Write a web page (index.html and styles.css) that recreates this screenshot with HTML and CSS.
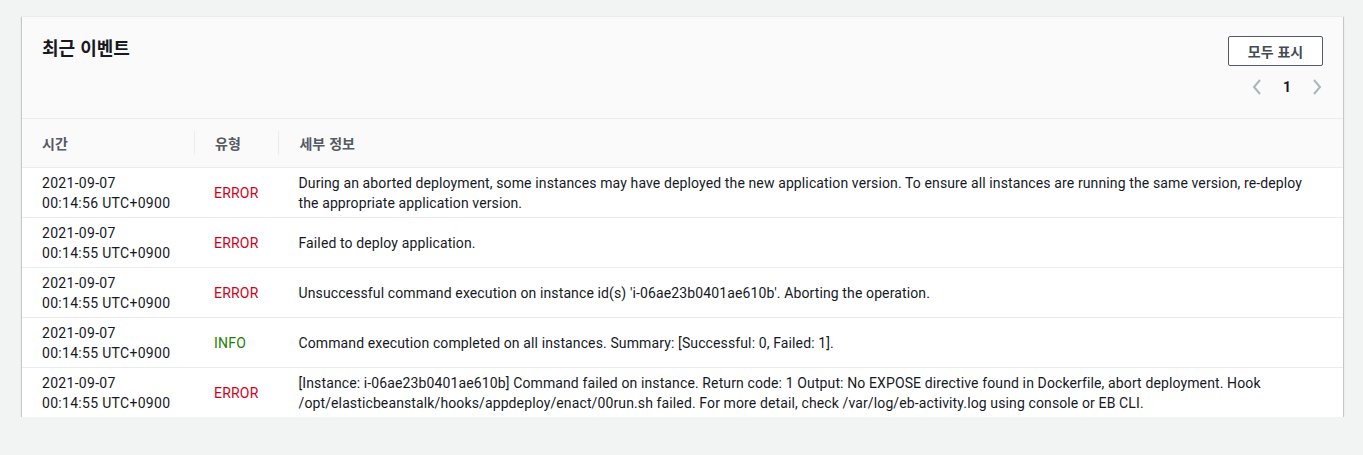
FILE: index.html
```html
<!DOCTYPE html>
<html lang="ko">
<head>
<meta charset="utf-8">
<title>최근 이벤트</title>
<link rel="stylesheet" href="styles.css">
</head>
<body>
<div class="card">
  <div class="card-head">
    <h2 class="title">최근 이벤트</h2>
    <div class="actions">
      <button class="btn">모두 표시</button>
      <div class="pager">
        <svg class="chev" width="12" height="18" viewBox="0 0 12 18"><path d="M9 2 L3 9 L9 16" fill="none" stroke="#aab7b8" stroke-width="2"/></svg>
        <span class="page">1</span>
        <svg class="chev" width="12" height="18" viewBox="0 0 12 18"><path d="M3 2 L9 9 L3 16" fill="none" stroke="#aab7b8" stroke-width="2"/></svg>
      </div>
    </div>
  </div>
  <table class="events">
    <thead>
      <tr>
        <th class="c-time"><span>시간</span></th>
        <th class="c-type"><span>유형</span></th>
        <th class="c-detail"><span>세부 정보</span></th>
      </tr>
    </thead>
    <tbody>
      <tr>
        <td class="c-time">2021-09-07<br>00:14:56 UTC+0900</td>
        <td class="c-type error">ERROR</td>
        <td class="c-detail">During an aborted deployment, some instances may have deployed the new application version. To ensure all instances are running the same version, re-deploy the appropriate application version.</td>
      </tr>
      <tr>
        <td class="c-time">2021-09-07<br>00:14:55 UTC+0900</td>
        <td class="c-type error">ERROR</td>
        <td class="c-detail">Failed to deploy application.</td>
      </tr>
      <tr>
        <td class="c-time">2021-09-07<br>00:14:55 UTC+0900</td>
        <td class="c-type error">ERROR</td>
        <td class="c-detail">Unsuccessful command execution on instance id(s) 'i-06ae23b0401ae610b'. Aborting the operation.</td>
      </tr>
      <tr>
        <td class="c-time">2021-09-07<br>00:14:55 UTC+0900</td>
        <td class="c-type info">INFO</td>
        <td class="c-detail">Command execution completed on all instances. Summary: [Successful: 0, Failed: 1].</td>
      </tr>
      <tr>
        <td class="c-time">2021-09-07<br>00:14:55 UTC+0900</td>
        <td class="c-type error">ERROR</td>
        <td class="c-detail">[Instance: i-06ae23b0401ae610b] Command failed on instance. Return code: 1 Output: No EXPOSE directive found in Dockerfile, abort deployment. Hook /opt/elasticbeanstalk/hooks/appdeploy/enact/00run.sh failed. For more detail, check /var/log/eb-activity.log using console or EB CLI.</td>
      </tr>
    </tbody>
  </table>
</div>
</body>
</html>
```
FILE: styles.css
```css
* { box-sizing: border-box; }
html, body { margin: 0; }
body {
  background: #f2f3f3;
  padding: 16px 20px 0 22px;
  font-family: Roboto, "Noto Sans CJK KR", sans-serif;
  font-size: 14px;
  color: #16191f;
}
.card {
  background: #fff;
  border-top: 1px solid #eaeded;
  box-shadow: 0 1px 1px 0 rgba(0,28,36,.3), 1px 1px 1px 0 rgba(0,28,36,.15), -1px 1px 1px 0 rgba(0,28,36,.15);
}
.card-head {
  background: #fafafa;
  display: flex;
  justify-content: space-between;
  align-items: flex-start;
  padding: 19px 20px 20px 20px;
  height: 101px;
}
.title {
  margin: 0;
  font-family: "Noto Sans CJK KR", sans-serif;
  font-size: 18px;
  font-weight: 700;
  line-height: 22px;
  color: #16191f;
}
.actions {
  display: flex;
  flex-direction: column;
  align-items: flex-end;
  gap: 11px;
}
.btn {
  width: 95px;
  height: 30px;
  border: 1px solid #545b64;
  border-radius: 2px;
  background: #fff;
  font-family: "Noto Sans CJK KR", sans-serif;
  font-size: 14px;
  font-weight: 700;
  color: #444b54;
  padding: 0;
  line-height: 28px;
}
.pager {
  display: flex;
  align-items: center;
  gap: 20px;
  height: 20px;
}
.chev { display: block; }
.page {
  font-weight: 700;
  font-size: 14px;
  color: #16191f;
}
.events {
  width: 100%;
  border-collapse: collapse;
}
.events th {
  background: #fafafa;
  border-top: 1px solid #eaeded;
  height: 49px;
  text-align: left;
  font-family: "Noto Sans CJK KR", sans-serif;
  font-weight: 700;
  font-size: 14px;
  color: #545b64;
  padding: 0;
}
.events th span {
  display: block;
  padding: 0 20px;
  line-height: 24px;
}
.events th + th span { border-left: 1px solid #eaeded; }
.events td {
  border-top: 1px solid #eaeded;
  padding: 5px 20px 4px;
  line-height: 20px;
  vertical-align: middle;
}
.events td.c-time { letter-spacing: 0.3px; }
.events td.c-type { letter-spacing: 0.2px; }
.events td.c-detail { letter-spacing: 0.12px; }
.c-time { width: 172px; }
.c-type { width: 84px; }
.error { color: #d0021b; }
.info { color: #1d8102; }
```
